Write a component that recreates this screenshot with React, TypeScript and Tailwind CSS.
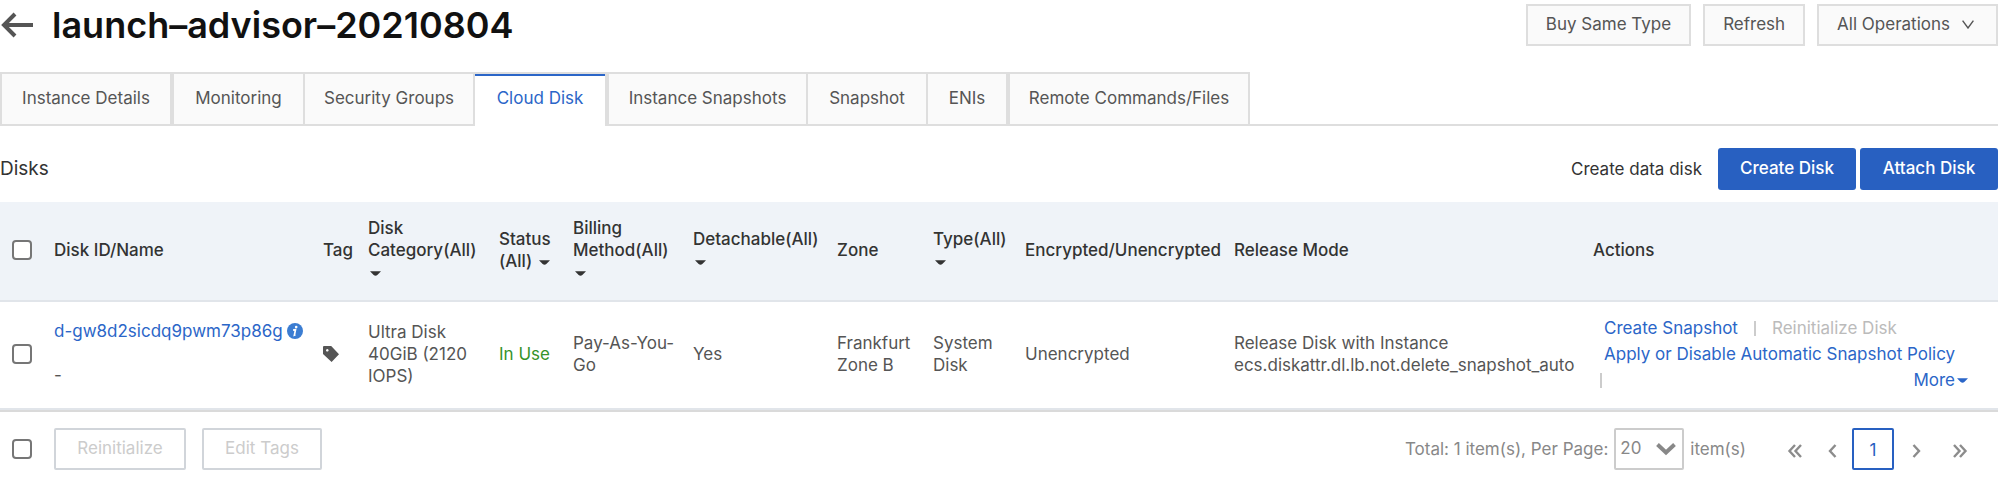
import type { ReactNode } from "react";

const tabs = [
  { label: "Instance Details", box: "w-[172px] border-l-2 border-r-2" },
  { label: "Monitoring", box: "w-[131px] border-l-2" },
  { label: "Security Groups", box: "w-[172px] border-l-2 border-r-2" },
  { label: "Cloud Disk", box: "w-[130px]", active: true },
  { label: "Instance Snapshots", box: "w-[201px] border-l-4" },
  { label: "Snapshot", box: "w-[120px] border-l-2" },
  { label: "ENIs", box: "w-[80px] border-l-2" },
  { label: "Remote Commands/Files", box: "w-[244px] border-l-4 border-r-2" },
];

const columnWidths = [
  "w-[46px]", "w-[270px]", "w-[44px]", "w-[131px]", "w-[74px]", "w-[120px]",
  "w-[144px]", "w-[96px]", "w-[92px]", "w-[209px]", "w-[359px]", "",
];

function Caret() {
  return (
    <svg aria-hidden="true" viewBox="0 0 12 5" className="ml-0.5 inline-block h-[5px] w-[11px] align-middle" fill="currentColor">
      <path d="M0 0h12L8 4.2Q6 5.6 4 4.2Z" />
    </svg>
  );
}

function Filter({ label }: { label: string }) {
  return (
    <button type="button" className="block text-left font-medium">
      {label} <Caret />
    </button>
  );
}

function Check({ label }: { label: string }) {
  return (
    <input
      type="checkbox"
      aria-label={label}
      className="block size-5 appearance-none rounded-[4px] border-2 border-[#767676] bg-white checked:bg-[#2860c1]"
    />
  );
}

function HeaderButton({ children }: { children: ReactNode }) {
  return (
    <button type="button" className="flex h-[42px] items-center gap-3 border-2 border-[#dedede] bg-[#fafafa] px-[18px] pb-0.5 text-[#555]">
      {children}
    </button>
  );
}

function Chevrons({ d, label, width }: { d: string; label: string; width: string }) {
  return (
    <button type="button" aria-label={label} className={`flex h-[42px] items-center justify-center ${width}`}>
      <svg aria-hidden="true" viewBox="0 0 16 14" className="mt-1 h-3.5 w-4" fill="none" stroke="#8c8c8c" strokeWidth="2.4">
        <path d={d} />
      </svg>
    </button>
  );
}

export default function App() {
  return (
    <main className="bg-white pr-3 font-['Inter','Liberation_Sans',sans-serif] text-[17px] leading-[22px] text-[#555]">
      <header className="flex items-start justify-between pt-1">
        <div className="flex items-center">
          <a href="#back" aria-label="Back">
            <svg aria-hidden="true" viewBox="0 0 34 26" className="h-[26px] w-[34px]" fill="none" stroke="#555" strokeWidth="4">
              <path d="M33 13H4M15 2L4 13l11 11" />
            </svg>
          </a>
          <h1 className="ml-[18px] text-[36px] font-semibold leading-[42px] text-[#111]">launch–advisor–20210804</h1>
        </div>
        <div className="flex gap-3">
          <HeaderButton>Buy Same Type</HeaderButton>
          <HeaderButton>Refresh</HeaderButton>
          <HeaderButton>
            All Operations
            <svg aria-hidden="true" viewBox="0 0 12 9" className="mr-1 h-[9px] w-3" fill="none" stroke="#555" strokeWidth="1.4">
              <path d="M.6.6L6 8 11.4.6" />
            </svg>
          </HeaderButton>
        </div>
      </header>

      <nav role="tablist" aria-label="Instance sections" className="mt-[26px] flex">
        {tabs.map((tab) => (
          <button
            key={tab.label}
            type="button"
            role="tab"
            aria-selected={!!tab.active}
            className={
              tab.active
                ? `h-[54px] whitespace-nowrap border-t-2 border-t-[#dedede] pb-1 text-[#2b66c8] shadow-[inset_0_2px_0_#2b66c8] ${tab.box}`
                : `h-[54px] whitespace-nowrap border-y-2 border-[#dedede] bg-[#fafafa] pb-0.5 ${tab.box}`
            }
          >
            {tab.label}
          </button>
        ))}
        <span className="flex-1 border-b-2 border-[#dedede]" />
      </nav>

      <section className="mt-[22px]">
        <div className="flex items-center justify-between">
          <h2 className="text-[19px] text-[#333]">Disks</h2>
          <div className="flex items-center gap-1">
            <span className="mr-3 text-[#333]">Create data disk</span>
            <button type="button" className="h-[42px] w-[138px] rounded-[3px] bg-[#2860c1] pb-0.5 font-medium text-white">Create Disk</button>
            <button type="button" className="h-[42px] w-[138px] rounded-[3px] bg-[#2860c1] pb-0.5 font-medium text-white">Attach Disk</button>
          </div>
        </div>

        <table className="mt-3 w-full table-fixed border-collapse text-left [&_td]:px-2 [&_td]:pb-0.5 [&_th]:px-2 [&_th]:pb-0.5 [&_th]:font-medium">
          <colgroup>
            {columnWidths.map((width, i) => (
              <col key={i} className={width} />
            ))}
          </colgroup>
          <thead>
            <tr className="h-[99px] border-b-2 border-[#e1e5ea] bg-[#eff3f8] text-[#333]">
              <th className="pl-3!"><Check label="Select all disks" /></th>
              <th>Disk ID/Name</th>
              <th className="px-[7px]!">Tag</th>
              <th><Filter label="Disk Category(All)" /></th>
              <th><Filter label="Status (All)" /></th>
              <th><Filter label="Billing Method(All)" /></th>
              <th><Filter label="Detachable(All)" /></th>
              <th>Zone</th>
              <th><Filter label="Type(All)" /></th>
              <th className="whitespace-nowrap">Encrypted/Unencrypted</th>
              <th>Release Mode</th>
              <th>Actions</th>
            </tr>
          </thead>
          <tbody>
            <tr className="h-[108px] border-b-2 border-[#e1e5ea]">
              <td className="pl-3!"><Check label="Select d-gw8d2sicdq9pwm73p86g" /></td>
              <td className="pb-1!">
                <div className="flex items-center gap-1">
                  <a href="#disk" className="text-[#2b66c8]">d-gw8d2sicdq9pwm73p86g</a>
                  <svg aria-hidden="true" viewBox="0 0 16 16" className="size-4 shrink-0">
                    <circle cx="8" cy="8" r="8" fill="#3b7dd2" />
                    <circle cx="9.2" cy="4" r="1.3" fill="#fff" />
                    <path d="M6.1 7.2l2.4-.5-1.1 5.4 1.1-.4" fill="none" stroke="#fff" strokeWidth="1.7" />
                  </svg>
                </div>
                <div className="mt-[22px]">-</div>
              </td>
              <td className="pl-[7px]!">
                <svg aria-label="Tags" viewBox="0 0 16 16" className="size-4" fill="#555">
                  <path fillRule="evenodd" d="M1 0h7.2L16 8.2 8.6 16 0 8V1Q0 0 1 0ZM4.300 3a1.300 1.300 0 1 0 .01 0Z" />
                </svg>
              </td>
              <td>Ultra Disk 40GiB (2120 IOPS)</td>
              <td className="whitespace-nowrap text-[#35932a]">In Use</td>
              <td>Pay-As-You-Go</td>
              <td>Yes</td>
              <td>Frankfurt Zone B</td>
              <td>System Disk</td>
              <td>Unencrypted</td>
              <td>Release Disk with Instance<br />ecs.diskattr.dl.lb.not.delete_snapshot_auto</td>
              <td className="pr-[30px]! leading-[26px]">
                <div className="flex items-center pl-[11px]">
                  <a href="#snapshot" className="text-[#2b66c8]">Create Snapshot</a>
                  <span className="mx-4 h-[15px] w-0.5 bg-[#ccc]" />
                  <span className="text-[#bbb]">Reinitialize Disk</span>
                </div>
                <a href="#policy" className="block whitespace-nowrap pl-[11px] text-[#2b66c8]">Apply or Disable Automatic Snapshot Policy</a>
                <div className="flex items-center justify-between pl-[7px]">
                  <span className="h-[15px] w-0.5 bg-[#ccc]" />
                  <button type="button" className="flex items-center text-[#2b66c8]">More <Caret /></button>
                </div>
              </td>
            </tr>
          </tbody>
        </table>

        <footer className="flex items-center border-t-2 border-[#dadada] pb-3 pl-3 pt-4">
          <Check label="Select all on page" />
          <button type="button" disabled className="ml-[22px] h-[42px] w-[132px] rounded-[2px] border-2 border-[#d1d5da] pb-0.5 text-[#ccc]">Reinitialize</button>
          <button type="button" disabled className="ml-4 h-[42px] w-[120px] rounded-[2px] border-2 border-[#d1d5da] pb-0.5 text-[#ccc]">Edit Tags</button>
          <div className="ml-auto flex items-center text-[#888]">
            <label htmlFor="page-size">Total: 1 item(s), Per Page:</label>
            <div className="relative mx-1.5">
              <select id="page-size" className="h-[42px] w-[70px] appearance-none rounded-[2px] border-2 border-[#ccc] bg-white pb-0.5 pl-1">
                <option>20</option>
                <option>50</option>
              </select>
              <svg aria-hidden="true" viewBox="0 0 20 14" className="pointer-events-none absolute right-2 top-3.5 h-3.5 w-5" fill="none" stroke="#888" strokeWidth="4">
                <path d="M1.500 2.500L10 10.500l8.500-8" />
              </svg>
            </div>
            <span>item(s)</span>
          </div>
          <nav aria-label="Pagination" className="ml-[30px] mr-4 flex">
            <Chevrons width="w-[38px]" label="First page" d="M8 1L2.500 7 8 13M14 1L8.500 7l5.500 6" />
            <Chevrons width="w-[38px]" label="Previous page" d="M10.500 1L5 7l5.500 6" />
            <button type="button" aria-current="page" className="h-[42px] w-[42px] rounded-[2px] border-2 border-[#2860c1] pt-0.5 text-[#2860c1]">1</button>
            <Chevrons width="w-[44px]" label="Next page" d="M5.500 1L11 7l-5.500 6" />
            <Chevrons width="w-[44px]" label="Last page" d="M2 1l5.500 6L2 13M8 1l5.500 6L8 13" />
          </nav>
        </footer>
      </section>
    </main>
  );
}
